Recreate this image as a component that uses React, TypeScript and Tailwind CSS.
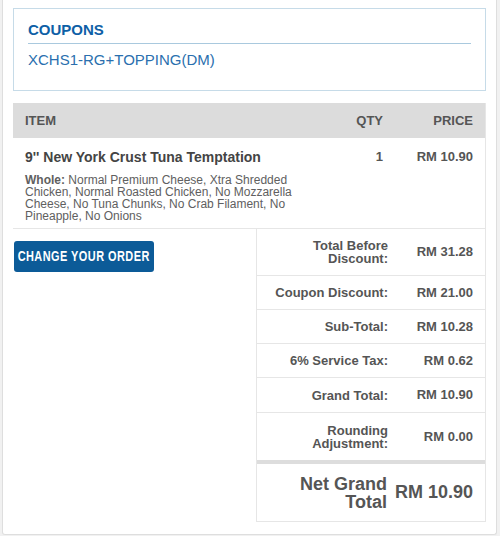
const ROWS = [
  { label: 'Total Before Discount:', value: 'RM 31.28', h: 'h-[47px]' },
  { label: 'Coupon Discount:', value: 'RM 21.00', h: 'h-[34px]' },
  { label: 'Sub-Total:', value: 'RM 10.28', h: 'h-[34px]' },
  { label: '6% Service Tax:', value: 'RM 0.62', h: 'h-[34px]' },
  { label: 'Grand Total:', value: 'RM 10.90', h: 'h-[35px]' },
  { label: 'Rounding Adjustment:', value: 'RM 0.00', h: 'h-[47px]' },
];

export default function App() {
  return (
    <div className="min-h-[536px] bg-[#f1f1f1] px-[2px] pb-[3px] font-['Liberation_Sans',Arial,sans-serif] text-[#555]">
      <div className="w-[495px] border border-t-0 border-[#dedede] bg-white px-[10px] pt-2 pb-3 rounded-b-[3px]">
        {/* coupons */}
        <div className="border border-[#c6dbe8] px-[14px] pt-[12px] pb-[21px]">
          <div className="border-b border-[#a9c9de] pb-[4px] text-[15px] font-bold leading-[18px] text-[#0e5fa6]">
            COUPONS
          </div>
          <div className="mt-[7px] text-[15px] leading-[18px] text-[#2a6fae]">XCHS1-RG+TOPPING(DM)</div>
        </div>

        {/* items */}
        <div className="mt-[12px] border-r border-[#e6e6e6]">
          <div className="flex h-[35px] items-center bg-[#dcdcdc] text-[13px] font-bold">
            <div className="flex-1 pl-[12px]">ITEM</div>
            <div className="w-[60px] text-right">QTY</div>
            <div className="w-[102px] pr-[12px] text-right">PRICE</div>
          </div>
          <div className="flex h-[91px] border-b border-[#e6e6e6] pt-[11px]">
            <div className="flex-1 pl-[12px]">
              <div className="text-[14px] font-bold leading-[16px] text-[#444]">9'' New York Crust Tuna Temptation</div>
              <p className="mt-[9px] w-[275px] text-[12px] leading-[12px] text-[#606060]">
                <span className="font-bold">Whole:</span> Normal Premium Cheese, Xtra Shredded Chicken, Normal Roasted
                Chicken, No Mozzarella Cheese, No Tuna Chunks, No Crab Filament, No Pineapple, No Onions
              </p>
            </div>
            <div className="w-[60px] text-right text-[13px] font-bold leading-[16px]">1</div>
            <div className="w-[102px] pr-[12px] text-right text-[13px] font-bold leading-[16px]">RM 10.90</div>
          </div>

          <div className="flex">
            <div className="flex-1 pt-[12px] pl-[1px]">
              <button
                type="button"
                className="flex h-[31px] w-[140px] items-center justify-center overflow-hidden rounded-[3px] bg-[#0c5b98] text-white"
              >
                <span className="inline-block scale-x-[0.78] whitespace-nowrap text-[14px] font-bold tracking-[0.6px]">
                  CHANGE YOUR ORDER
                </span>
              </button>
            </div>
            <div className="w-[229px] border-l border-b border-[#e6e6e6] text-[13px] font-bold">
              {ROWS.map((r, i) => (
                <div
                  key={r.label}
                  className={`flex items-center ${r.h} ${i < ROWS.length - 1 ? 'border-b border-[#e6e6e6]' : ''}`}
                >
                  <div className="w-[143px] px-[12px] text-right leading-[13px]">{r.label}</div>
                  <div className="flex-1 pr-[12px] text-right">{r.value}</div>
                </div>
              ))}
              <div className="flex h-[61px] items-center border-t-4 border-[#dddddd]">
                <div className="w-[137px] pl-[20px] pr-[7px] text-right text-[18px] leading-[18px]">Net Grand Total</div>
                <div className="flex-1 whitespace-nowrap pr-[12px] text-right text-[18px]">RM 10.90</div>
              </div>
            </div>
          </div>
        </div>
      </div>
    </div>
  );
}
